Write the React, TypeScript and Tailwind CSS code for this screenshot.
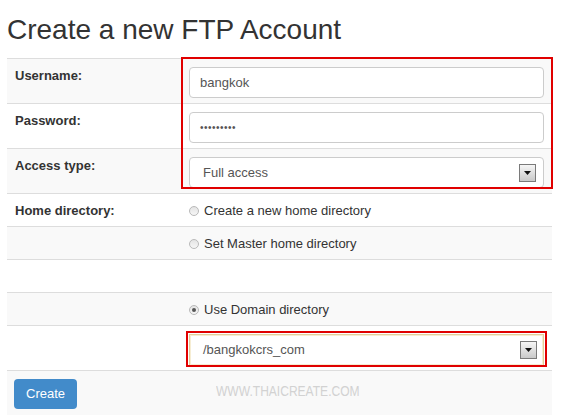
const font = { fontFamily: '"Liberation Sans", Arial, Helvetica, sans-serif' }

function ArrowBox() {
  return (
    <div className="flex h-[18px] w-[17px] items-center justify-center border border-[#7a7a7a] bg-gradient-to-b from-[#f6f6f6] to-[#c9c9c9]">
      <svg width="7" height="4" viewBox="0 0 7 4">
        <path d="M0 0 H7 L3.5 4 Z" fill="#111" />
      </svg>
    </div>
  )
}

function Radio({ checked }: { checked?: boolean }) {
  return (
    <span className="mr-[5px] inline-flex h-[10px] w-[10px] items-center justify-center rounded-full border border-[#b9b9b9] bg-gradient-to-b from-[#e4e4e4] to-[#f6f6f6]">
      {checked && <span className="h-[4px] w-[4px] rounded-full bg-[#555]" />}
    </span>
  )
}

const rowBase = 'flex border-t border-[#ddd] text-[13px] leading-[18px] text-[#333]'

export default function App() {
  return (
    <div className="relative h-[415px] w-[578px] overflow-hidden bg-white" style={font}>
      <h1 className="mt-[14px] mb-[12px] pl-[7px] text-[28px] leading-[32px] text-[#333]">
        Create a new FTP Account
      </h1>

      <div className="ml-[7px] w-[545px]">
        {/* Username */}
        <div className={`${rowBase} h-[45px] bg-[#f9f9f9]`}>
          <div className="w-[174px] px-2 pt-2 font-bold">Username:</div>
          <div className="flex-1 px-2 pt-2">
            <div className="flex h-[31px] items-center rounded-[4px] border border-[#ccc] bg-white pl-[10px] text-[#555]">
              bangkok
            </div>
          </div>
        </div>

        {/* Password */}
        <div className={`${rowBase} h-[45px] bg-white`}>
          <div className="w-[174px] px-2 pt-2 font-bold">Password:</div>
          <div className="flex-1 px-2 pt-2">
            <div className="flex h-[31px] items-center rounded-[4px] border border-[#ccc] bg-white pl-[10px] text-[10px] tracking-[0.5px] text-[#555]">
              •••••••••
            </div>
          </div>
        </div>

        {/* Access type */}
        <div className={`${rowBase} h-[45px] bg-[#f9f9f9]`}>
          <div className="w-[174px] px-2 pt-2 font-bold">Access type:</div>
          <div className="flex-1 px-2 pt-2">
            <div className="flex h-[31px] items-center justify-between rounded-[4px] border border-[#ccc] bg-white pr-[7px] pl-[13px] text-[#555]">
              <span>Full access</span>
              <ArrowBox />
            </div>
          </div>
        </div>

        {/* Home directory */}
        <div className={`${rowBase} h-[33px] bg-white`}>
          <div className="w-[174px] px-2 pt-2 font-bold">Home directory:</div>
          <div className="flex flex-1 items-start px-2 pt-2">
            <span className="flex items-center">
              <Radio />
              Create a new home directory
            </span>
          </div>
        </div>

        <div className={`${rowBase} h-[33px] bg-[#f9f9f9]`}>
          <div className="w-[174px] px-2 pt-2" />
          <div className="flex flex-1 items-start px-2 pt-2">
            <span className="flex items-center">
              <Radio />
              Set Master home directory
            </span>
          </div>
        </div>

        <div className={`${rowBase} h-[33px] bg-white`}>
          <div className="w-[174px] px-2 pt-2" />
          <div className="flex-1 px-2 pt-2" />
        </div>

        <div className={`${rowBase} h-[33px] bg-[#f9f9f9]`}>
          <div className="w-[174px] px-2 pt-2" />
          <div className="flex flex-1 items-start px-2 pt-2">
            <span className="flex items-center">
              <Radio checked />
              Use Domain directory
            </span>
          </div>
        </div>

        {/* Domain select */}
        <div className={`${rowBase} h-[45px] bg-white`}>
          <div className="w-[174px] px-2 pt-2" />
          <div className="flex-1 px-2 pt-2">
            <div className="flex h-[32px] items-center justify-between border border-[#e2cf9b] bg-white pr-[6px] pl-[13px] text-[#555] shadow-[inset_0_0_0_1px_#f6edd3]">
              <span>/bangkokcrs_com</span>
              <ArrowBox />
            </div>
          </div>
        </div>

        {/* Submit */}
        <div className={`${rowBase} h-[45px] bg-[#f9f9f9]`}>
          <div className="w-[174px] pt-2 pl-[7px]">
            <button className="h-[30px] rounded-[4px] bg-[#428bca] px-3 text-[13px] text-white">
              Create
            </button>
          </div>
          <div className="flex-1" />
        </div>
      </div>

      {/* highlight annotations */}
      <div className="pointer-events-none absolute top-[57px] left-[181px] h-[132px] w-[372px] border-2 border-[#e00000]" />
      <div className="pointer-events-none absolute top-[331px] left-[186px] h-[36px] w-[361px] border-2 border-[#e00000]" />

      {/* watermark */}
      <div className="pointer-events-none absolute top-[381px] left-[216px] origin-left scale-x-[0.86] text-[14px] whitespace-nowrap text-[#d2d2d2]">
        WWW.THAICREATE.COM
      </div>
    </div>
  )
}
